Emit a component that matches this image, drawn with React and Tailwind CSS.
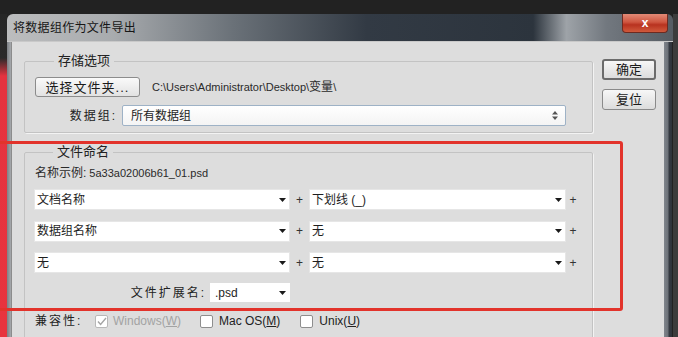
import React from 'react';

const Caret = () => (
  <svg width="7" height="4" viewBox="0 0 7 4" className="shrink-0">
    <path d="M0 0h7L3.5 4z" fill="#1a1a1a" />
  </svg>
);

function Dropdown({ label, className = '' }) {
  return (
    <div
      className={`h-[21px] bg-white border border-[#e6e6e6] flex items-center justify-between pl-[2px] pr-[3px] ${className}`}
    >
      <span className="text-[12px] leading-none text-[#1e1e1e]">{label}</span>
      <Caret />
    </div>
  );
}

function NameRow({ left, right }) {
  return (
    <div className="flex items-center">
      <Dropdown label={left} className="w-[256px]" />
      <span className="w-[19px] text-center text-[12px] text-[#333]">+</span>
      <Dropdown label={right} className="w-[257px]" />
      <span className="w-[14px] text-center text-[12px] text-[#333]">+</span>
    </div>
  );
}

function Check({ checked, disabled }) {
  return (
    <span
      className={`w-[13px] h-[13px] rounded-[2px] border bg-white flex items-center justify-center ${
        disabled ? 'border-[#b8b8b8]' : 'border-[#8e8e8e]'
      }`}
    >
      {checked && (
        <svg width="10" height="9" viewBox="0 0 10 9">
          <path d="M1 4.5l2.6 3L9 1" fill="none" stroke="#a5a5a5" strokeWidth="1.4" />
        </svg>
      )}
    </span>
  );
}

function DlgButton({ children, main }) {
  return (
    <button
      className={`w-[54px] h-[21px] rounded-[3px] bg-gradient-to-b from-[#f7f7f7] to-[#dcdcdc] text-[13px] leading-none text-[#1a1a1a] ${
        main ? 'border-2 border-[#6b6b6b]' : 'border border-[#8a8a8a]'
      }`}
    >
      {children}
    </button>
  );
}

export default function App() {
  return (
    <div className="relative w-[678px] h-[337px] overflow-hidden bg-[#222222] flex flex-col font-['Liberation_Sans','Noto_Sans_CJK_SC',sans-serif] text-[#1c1c1c]">
      <div className="h-[14px] shrink-0" />
      <div className="flex flex-1 min-h-0">
        {/* desktop strip on the left */}
        <div className="w-[7px] shrink-0 bg-[linear-gradient(to_bottom,#262626_0px,#2a2a2a_44px,#e5333f_62px,#e8343e_100%)]" />

        {/* window */}
        <div className="w-[666px] shrink-0 flex flex-col rounded-t-[6px] overflow-hidden">
          {/* title bar */}
          <div className="h-[28px] shrink-0 flex items-start justify-between bg-[linear-gradient(to_right,#bcbdbe_0%,#a8abae_16%,#6a7178_34%,#323a44_54%,#2c343d_79%,#9ea3a8_84%,#72787f_90%,#565c63_100%)] border-b border-[#c9c9c9]">
            <span className="self-center pl-[6px] text-[12px] tracking-[0.3px] text-[#161616]">
              将数据组作为文件导出
            </span>
            <div className="mr-[5px] w-[46px] h-[19px] rounded-b-[4px] border border-t-0 border-[#6e2a20] bg-[linear-gradient(to_bottom,#e28a76_0%,#cf5640_45%,#b8321f_60%,#d05a3c_100%)] flex items-center justify-center">
              <span className="text-white text-[12px] font-bold leading-none">x</span>
            </div>
          </div>

          {/* body */}
          <div className="flex flex-1 min-h-0">
            <div className="w-[5px] shrink-0 bg-[linear-gradient(to_right,#7c8085,#a7aaad)] border-r border-[#8c8c8c]" />
            <div className="w-[652px] shrink-0 bg-[#dddddd] flex">
              {/* main column */}
              <div className="ml-[12px] w-[569px] flex flex-col">
                <fieldset className="mt-[11px] border border-[#c3c3c3] rounded-[2px] shadow-[1px_1px_0_#f3f3f3] px-[10px] pt-[8px] pb-[6px]">
                  <legend className="ml-[19px] px-[4px] text-[13px] leading-[16px] text-[#222]">
                    存储选项
                  </legend>
                  <div className="flex items-center h-[20px]">
                    <button className="w-[105px] h-[20px] rounded-[3px] border border-[#8c8c8c] bg-gradient-to-b from-[#fafafa] to-[#e2e2e2] text-[13px] leading-none tracking-[1px] text-[#1a1a1a]">
                      选择文件夹...
                    </button>
                    <span className="ml-[12px] text-[11px] text-[#2a2a2a]">
                      C:\Users\Administrator\Desktop\<span className="text-[12px]">变量</span>\
                    </span>
                  </div>
                  <div className="mt-[8px] flex items-center">
                    <span className="w-[82px] text-right text-[12px] tracking-[2px] text-[#222]">数据组:</span>
                    <div className="ml-[5px] w-[444px] h-[21px] rounded-[2px] border border-[#9eb2c6] bg-gradient-to-b from-white to-[#f4f4f4] flex items-center justify-between pl-[8px] pr-[7px]">
                      <span className="text-[12px] leading-none text-[#1e1e1e]">所有数据组</span>
                      <svg width="6" height="9" viewBox="0 0 6 9">
                        <path d="M0 3.5L3 0l3 3.5zM0 5.5L3 9l3-3.5z" fill="#555" />
                      </svg>
                    </div>
                  </div>
                </fieldset>

                <fieldset className="mt-[11px] border border-[#c3c3c3] rounded-[2px] shadow-[1px_1px_0_#f3f3f3] pl-[9px] pr-[10px] pt-[5px] pb-[30px]">
                  <legend className="ml-[19px] px-[4px] text-[13px] leading-[16px] text-[#222]">
                    文件命名
                  </legend>
                  <div className="h-[16px] ml-[1px] flex items-center text-[#2a2a2a]">
                    <span className="text-[12px]">名称示例:</span>
                    <span className="ml-[3px] text-[11px]">5a33a02006b61_01.psd</span>
                  </div>
                  <div className="mt-[8px] flex flex-col gap-[10.5px]">
                    <NameRow left="文档名称" right="下划线 (_)" />
                    <NameRow left="数据组名称" right="无" />
                    <NameRow left="无" right="无" />
                  </div>
                  <div className="mt-[10px] flex items-center">
                    <span className="w-[172px] text-right text-[12px] tracking-[2px] text-[#222]">文件扩展名:</span>
                    <div className="ml-[4px] w-[80px] h-[19px] bg-white flex items-center justify-between pl-[5px] pr-[4px]">
                      <span className="text-[12px] leading-none text-[#1e1e1e]">.psd</span>
                      <Caret />
                    </div>
                  </div>
                  <div className="mt-[11px] ml-[1px] flex items-center h-[16px] text-[12px]">
                    <span className="w-[60px] tracking-[2px] text-[#222]">兼容性:</span>
                    <Check checked disabled />
                    <span className="ml-[5px] text-[#a3a3a3]">
                      Windows(<span className="underline">W</span>)
                    </span>
                    <span className="ml-[19px]">
                      <Check />
                    </span>
                    <span className="ml-[6px] text-[#222]">
                      Mac OS(<span className="underline">M</span>)
                    </span>
                    <span className="ml-[20px]">
                      <Check />
                    </span>
                    <span className="ml-[6px] text-[#222]">
                      Unix(<span className="underline">U</span>)
                    </span>
                  </div>
                </fieldset>
              </div>

              {/* right buttons */}
              <div className="ml-[9px] mt-[17px] flex flex-col gap-[9px]">
                <DlgButton main>确定</DlgButton>
                <DlgButton>复位</DlgButton>
              </div>
            </div>
            <div className="w-[8px] shrink-0 bg-[linear-gradient(to_right,#80858c_0px,#6c7178_4px,#353a42_5px,#2d3239_8px)]" />
          </div>
        </div>
        <div className="flex-1 bg-[#3c3c3c]" />
      </div>

      {/* red annotation frame */}
      <div className="absolute left-[-3px] top-[141px] w-[626px] h-[170px] border-[3px] border-[#e2332b] rounded-[3px] pointer-events-none" />
    </div>
  );
}
